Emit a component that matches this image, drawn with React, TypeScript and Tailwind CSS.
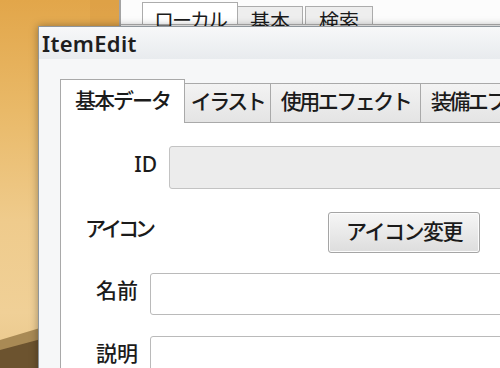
import React from "react"

const font = "font-['Noto_Sans','Noto_Sans_CJK_JP',sans-serif]"

function Wallpaper() {
  return (
    <svg className="absolute inset-0" width="500" height="368" viewBox="0 0 500 368">
      <defs>
        <linearGradient id="wood" x1="0" y1="0" x2="0" y2="1">
          <stop offset="0" stopColor="#e2a64a" />
          <stop offset="0.3" stopColor="#e9b968" />
          <stop offset="0.6" stopColor="#efcb8c" />
          <stop offset="0.85" stopColor="#f0d097" />
          <stop offset="1" stopColor="#e8c68a" />
        </linearGradient>
      </defs>
      <rect width="500" height="368" fill="url(#wood)" />
      <rect x="90" y="0" width="30" height="40" fill="#d8993f" opacity="0.35" />
      <polygon points="0,340 60,322 60,368 0,368" fill="#a98a55" />
      <polygon points="0,350 60,334 60,368 0,368" fill="#6c532f" />
    </svg>
  )
}

function BackWindow() {
  return (
    <div className="absolute left-[119px] top-0 h-[60px] w-[400px] border-l-2 border-[#a3a3a3] bg-[#fcfcfc]">
      <div className="flex h-[25px] items-end border-b border-[#b4b4b4] pl-[21px]">
        <div className="flex h-[22px] w-[96px] items-start justify-center border border-b-0 border-[#acacac] bg-white pt-[6px] text-[20px] leading-[24px] tracking-[-2px]">
          ローカル
        </div>
        <div className="flex h-[18px] w-[65px] items-start justify-center border border-b-0 border-l-0 border-[#acacac] bg-[#eeeeee] pt-[3px] text-[20px] leading-[24px]">
          基本
        </div>
        <div className="ml-[2px] flex h-[18px] w-[68px] items-start justify-center border border-b-0 border-[#acacac] bg-[#eeeeee] pt-[3px] text-[20px] leading-[24px]">
          検索
        </div>
      </div>
    </div>
  )
}

const tabs = [
  { label: "イラスト", w: "w-[86px]" },
  { label: "使用エフェクト", w: "w-[150px]" },
  { label: "装備エフェクト", w: "w-[150px]" },
]

export default function App() {
  return (
    <div className={`relative h-[368px] w-[500px] overflow-hidden ${font} text-[#1b1b1b]`}>
      <Wallpaper />
      <BackWindow />

      <div className="absolute left-[38px] top-[26px] flex h-[400px] w-[560px] flex-col border border-[#8f969c] bg-[#f4f6f8] shadow-[0_0_8px_rgba(0,0,0,0.35)]">
        <div className="flex h-[32px] shrink-0 items-center bg-gradient-to-b from-[#f7f8f9] to-[#e8ebee] pl-[3px]">
          <span className="font-['Noto_Sans',sans-serif] text-[22px] font-semibold leading-none tracking-[0.3px] text-[#1e1e1e]">
            ItemEdit
          </span>
        </div>

        <div className="flex flex-1 flex-col bg-[#f6f7f8] pl-[21px] pt-[20px]">
          <div className="relative z-10 -mb-px flex h-[44px] items-end font-medium">
            <div className="flex h-[44px] w-[125px] items-center justify-center border border-b-0 border-[#a9a9a9] bg-white pb-[2px] text-[21px] tracking-[-2px]">
              基本データ
            </div>
            {tabs.map((t) => (
              <div
                key={t.label}
                className={`flex h-[40px] ${t.w} shrink-0 items-center justify-center border border-l-0 border-[#a9a9a9] bg-gradient-to-b from-[#f3f3f3] to-[#e4e4e4] pb-[2px] text-[21px] tracking-[-2.5px]`}
              >
                {t.label}
              </div>
            ))}
          </div>

          <div className="flex flex-1 flex-col border-l border-t border-[#a9a9a9] bg-white font-medium">
            <div className="mt-[23px] flex items-center">
              <div className="w-[96px] pb-[6px] text-right text-[21px]">ID</div>
              <div className="ml-[12px] h-[43px] w-[420px] rounded-[3px] border border-[#c3c3c3] bg-[#ececec]" />
            </div>

            <div className="mt-[23px] flex items-start">
              <div className="w-[267px] pl-[24px] pt-[1px] text-[21px] tracking-[-4px]">アイコン</div>
              <button className="flex h-[41px] w-[152px] items-center justify-center rounded-[3px] border border-[#a5a5a5] bg-gradient-to-b from-[#f6f6f6] to-[#dddddd] pb-[2px] text-[21px] tracking-[-1.5px] shadow-[inset_0_0_0_1px_#fcfcfc]">
                アイコン変更
              </button>
            </div>

            <div className="mt-[20px] flex items-center">
              <div className="w-[77px] pb-[6px] text-right text-[21px]">名前</div>
              <div className="ml-[12px] h-[42px] w-[420px] rounded-[3px] border border-[#bababa] bg-white" />
            </div>

            <div className="mt-[21px] flex items-start">
              <div className="w-[77px] pt-[2px] text-right text-[21px]">説明</div>
              <div className="ml-[12px] h-[80px] w-[420px] rounded-[3px] border border-[#bababa] bg-white" />
            </div>
          </div>
        </div>
      </div>
    </div>
  )
}
